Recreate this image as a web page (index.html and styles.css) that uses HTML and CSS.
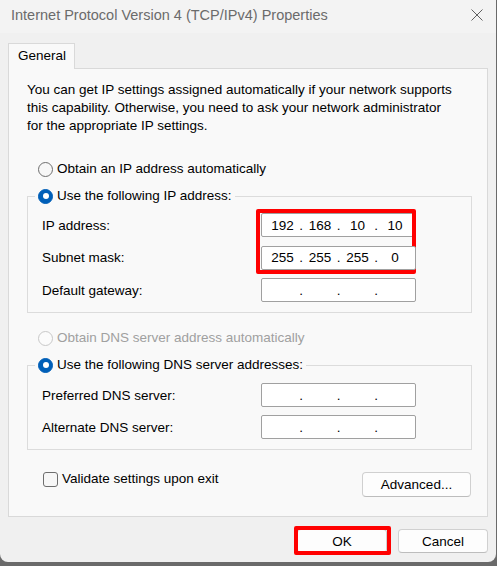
FILE: index.html
```html
<!doctype html>
<html lang="en">
  <head>
    <title>Internet Protocol Version 4 (TCP/IPv4) Properties</title>
    <link rel="stylesheet" href="styles.css">
  </head>
  <body>
    <div id="window">
      <div id="title-bar">
        <div id="title">Internet Protocol Version 4 (TCP/IPv4) Properties</div>
        <button class="close" aria-label="Close">
          <svg width="12" height="12" viewBox="0 0 12 12">
            <path d="M0.5 0.5 L11.5 11.5 M11.5 0.5 L0.5 11.5" stroke="#606060" stroke-width="1" fill="none" />
          </svg>
        </button>
      </div>

      <div class="tabs">
        <div class="tab">General</div>
      </div>

      <div class="panel">
        <p class="intro">You can get IP settings assigned automatically if your network supports this capability. Otherwise, you need to ask your network administrator for the appropriate IP settings.</p>

        <label class="option top"><span class="radio"></span>Obtain an IP address automatically</label>
        <fieldset class="group ip-group">
          <legend><label class="option"><span class="radio on"></span>Use the following IP address:</label></legend>
          <div class="row">
            <span class="label">IP address:</span>
            <div class="ip">
              <span class="seg">192</span><span class="dot">.</span><span class="seg">168</span><span class="dot">.</span><span class="seg">10</span><span class="dot">.</span><span class="seg">10</span>
              <span class="mark mark-ip"></span>
            </div>
          </div>
          <div class="row">
            <span class="label">Subnet mask:</span>
            <div class="ip">
              <span class="seg">255</span><span class="dot">.</span><span class="seg">255</span><span class="dot">.</span><span class="seg">255</span><span class="dot">.</span><span class="seg">0</span>
            </div>
          </div>
          <div class="row">
            <span class="label">Default gateway:</span>
            <div class="ip">
              <span class="seg"></span><span class="dot">.</span><span class="seg"></span><span class="dot">.</span><span class="seg"></span><span class="dot">.</span><span class="seg"></span>
            </div>
          </div>
        </fieldset>

        <label class="option top dns disabled"><span class="radio"></span>Obtain DNS server address automatically</label>
        <fieldset class="group dns-group">
          <legend><label class="option"><span class="radio on"></span>Use the following DNS server addresses:</label></legend>
          <div class="row">
            <span class="label">Preferred DNS server:</span>
            <div class="ip">
              <span class="seg"></span><span class="dot">.</span><span class="seg"></span><span class="dot">.</span><span class="seg"></span><span class="dot">.</span><span class="seg"></span>
            </div>
          </div>
          <div class="row">
            <span class="label">Alternate DNS server:</span>
            <div class="ip">
              <span class="seg"></span><span class="dot">.</span><span class="seg"></span><span class="dot">.</span><span class="seg"></span><span class="dot">.</span><span class="seg"></span>
            </div>
          </div>
        </fieldset>

        <div class="bottom">
          <label class="check"><span class="box"></span>Validate settings upon exit</label>
          <button class="btn advanced">Advanced...</button>
        </div>
      </div>

      <div class="footer">
        <button class="btn ok">OK<span class="mark mark-ok"></span></button>
        <button class="btn">Cancel</button>
      </div>
    </div>
  </body>
</html>
```

FILE: styles.css
```css
body,
html {
  margin: 0;
  height: 100%;
  background-color: #6a6a6a;
  color: #000;
  font-family: "Liberation Sans", Arial, sans-serif;
  font-size: 13.5px;
}

#window {
  width: 496px;
  height: 562px;
  background-color: #f0f0f0;
  border-radius: 0 0 8px 8px;
  display: flex;
  flex-direction: column;
  overflow: hidden;
}

#title-bar {
  height: 30px;
  padding: 0 13px 3px 11px;
  display: flex;
  justify-content: space-between;
  align-items: center;
  background-color: #f3f3f3;
}

#title {
  font-size: 14.5px;
  color: #6b6b6b;
}

.close {
  background: none;
  border: none;
  padding: 0;
  width: 12px;
  height: 12px;
  display: flex;
}

.tabs {
  display: flex;
  padding: 10px 8px 0;
}

.tab {
  height: 25px;
  line-height: 23px;
  padding: 0 8px 0 9px;
  border: 1px solid #d9d9d9;
  border-bottom: none;
  background-color: #f9f9f9;
  margin-bottom: -1px;
  position: relative;
  z-index: 1;
}

.panel {
  margin: 0 8px;
  border: 1px solid #d9d9d9;
  background-color: #f9f9f9;
  padding: 12px 15px 19px 18px;
}

.intro {
  margin: 0;
  width: 432px;
  line-height: 18px;
}

.option {
  display: flex;
  align-items: center;
  line-height: 18px;
  white-space: nowrap;
}

.option.top {
  margin: 25px 0 0 11px;
}

.option.dns {
  margin-top: 16px;
}

.option.disabled {
  color: #a0a0a0;
}

.radio {
  width: 15px;
  height: 15px;
  box-sizing: border-box;
  border: 1px solid #6e6e6e;
  border-radius: 50%;
  background-color: #f7f7f7;
  margin-right: 4px;
  position: relative;
}

.option.disabled .radio {
  border-color: #c8c8c8;
  background-color: #fbfbfb;
}

.radio.on {
  border-color: #005fb8;
  background-color: #005fb8;
}

.radio.on::after {
  content: "";
  position: absolute;
  left: 3.5px;
  top: 3.5px;
  width: 6px;
  height: 6px;
  border-radius: 50%;
  background-color: #fff;
}

.group {
  margin: 9px 0 0;
  padding: 8px 0 10px 7px;
  border: 1px solid #dcdcdc;
  min-width: 0;
}

.dns-group {
  padding-top: 9px;
}

.group legend {
  padding: 0 3px;
}

.row {
  display: flex;
  align-items: center;
  padding-left: 7px;
}

.row + .row {
  margin-top: 8px;
}

.ip-group .row + .row {
  margin-top: 8.5px;
}

.label {
  width: 219px;
}

.ip {
  width: 155px;
  height: 24px;
  box-sizing: border-box;
  border: 1px solid #a0a0a0;
  border-radius: 2px;
  background-color: #fff;
  display: flex;
  align-items: center;
  padding: 0 5px 0 5.5px;
  position: relative;
}

.seg {
  width: 30px;
  text-align: center;
}

.dot {
  width: 7.5px;
  text-align: center;
}

.mark {
  position: absolute;
  border: 4px solid #ff0000;
  border-radius: 2px;
  pointer-events: none;
}

.mark-ip {
  left: -6px;
  top: -5px;
  right: -1px;
  height: 57px;
}

.mark-ok {
  left: -4px;
  right: -5px;
  top: -4px;
  bottom: -3px;
}

.bottom {
  display: flex;
  justify-content: space-between;
  align-items: flex-start;
  margin-top: 20px;
}

.check {
  display: flex;
  align-items: center;
  line-height: 18px;
  padding-left: 16px;
}

.box {
  width: 15px;
  height: 15px;
  box-sizing: border-box;
  border: 1px solid #6e6e6e;
  border-radius: 3px;
  background-color: #f7f7f7;
  margin-right: 4px;
}

.btn {
  width: 90px;
  height: 24px;
  padding: 0;
  border: 1px solid #d0d0d0;
  border-bottom-color: #bdbdbd;
  border-radius: 4px;
  background-color: #fdfdfd;
  color: #000;
  font-family: inherit;
  font-size: inherit;
  position: relative;
}

.btn.advanced {
  width: 109px;
  height: 25px;
  margin: 2px 1px 0 0;
}

.footer {
  display: flex;
  justify-content: flex-end;
  gap: 11px;
  padding: 12px 8px 0;
}
```
